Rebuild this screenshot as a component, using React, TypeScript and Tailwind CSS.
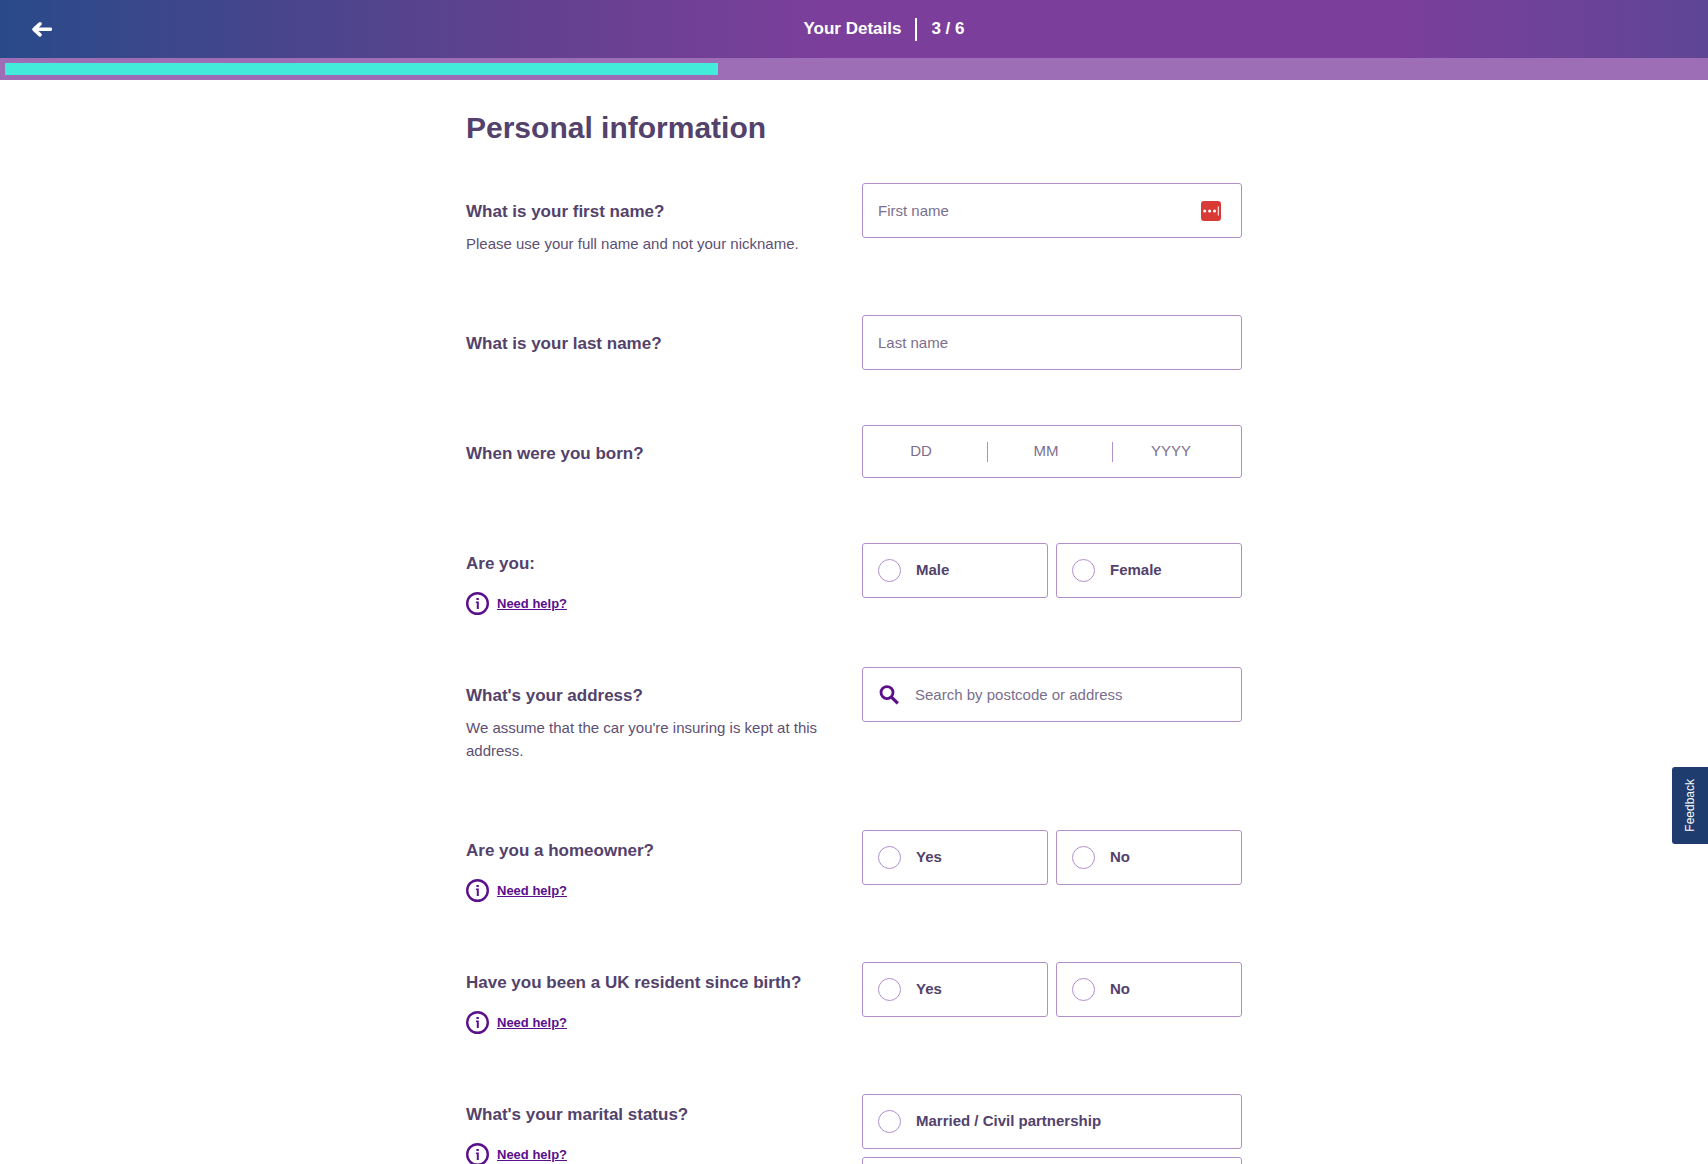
import { ReactNode } from "react";

interface QuestionProps {
  label: string;
  htmlFor?: string;
  hint?: string;
  needHelp?: boolean;
  children: ReactNode;
}

function InfoIcon() {
  return (
    <svg className="h-[23px] w-[23px]" viewBox="0 0 23 23" fill="none" aria-hidden="true">
      <circle cx="11.5" cy="11.5" r="10.3" stroke="#5a0f8c" strokeWidth="2.4" />
      <rect x="10.4" y="6" width="2.4" height="2" fill="#5a0f8c" />
      <path d="M9.9 9.6h2.9V17h-2v-5.9h-.9z" fill="#5a0f8c" />
    </svg>
  );
}

function Question({ label, htmlFor, hint, needHelp, children }: QuestionProps) {
  const labelClass = "block text-[17px] leading-6 font-bold text-[#53426b]";

  return (
    <div
      className="grid min-h-[110px] grid-cols-1 pb-[52px] md:grid-cols-[minmax(0,1fr)_380px] md:gap-x-4"
      role={htmlFor ? undefined : "group"}
      aria-label={htmlFor ? undefined : label}
    >
      <div className="pt-[17px]">
        {htmlFor ? (
          <label htmlFor={htmlFor} className={labelClass}>
            {label}
          </label>
        ) : (
          <p className={labelClass}>{label}</p>
        )}
        {hint && (
          <p className="my-2 text-[15px] leading-[23px] text-[#5d4f73]">{hint}</p>
        )}
        {needHelp && (
          <a
            href="#help"
            className="mt-4 flex w-fit items-center gap-2 text-[13px] leading-[23px] font-bold text-[#5a0f8c] underline"
          >
            <InfoIcon />
            Need help?
          </a>
        )}
      </div>
      <div>{children}</div>
    </div>
  );
}

const fieldClass =
  "h-[55px] w-full rounded-[3px] border border-[#b18fcb] bg-white text-[15px] text-[#53426b] placeholder:text-[#7b6f8d]";

function RadioOption({ name, label }: { name: string; label: string }) {
  return (
    <label className="flex h-[55px] flex-1 cursor-pointer items-center gap-[15px] rounded-[3px] border border-[#b18fcb] px-[15px] text-[15px] font-bold text-[#53426b]">
      <input
        type="radio"
        name={name}
        className="h-[23px] w-[23px] appearance-none rounded-full border border-[#b18fcb] checked:border-8 checked:border-[#5a0f8c]"
      />
      {label}
    </label>
  );
}

function YesNo({ name }: { name: string }) {
  return (
    <div className="mt-2 flex gap-2">
      <RadioOption name={name} label="Yes" />
      <RadioOption name={name} label="No" />
    </div>
  );
}

const maritalStatuses = ["Married / Civil partnership", "Single"];

const dateParts = [
  { placeholder: "DD", label: "Day" },
  { placeholder: "MM", label: "Month" },
  { placeholder: "YYYY", label: "Year" },
];

export default function App() {
  return (
    <div className="min-h-screen bg-white font-['Liberation_Sans',Arial,sans-serif]">
      <header className="flex h-[58px] items-center bg-[linear-gradient(90deg,#294a89_0%,#61418f_30%,#7b3f9b_48%,#7b3f9b_82%,#5f4595_100%)] text-white">
        <button type="button" aria-label="Back" className="flex w-[60px] justify-end pr-2">
          <svg className="h-5 w-5" viewBox="0 0 20 20" fill="none" aria-hidden="true">
            <path
              d="M8 4.8 2 10.3l6 5.5M2.5 10.3H18.4"
              stroke="currentColor"
              strokeWidth="3.6"
              strokeLinecap="round"
              strokeLinejoin="round"
            />
          </svg>
        </button>
        <div className="flex flex-1 items-center justify-center text-[17px] leading-6 font-bold">
          <span>Your Details</span>
          <span className="mx-[14px] h-[23px] w-[2px] bg-white" />
          <span>3 / 6</span>
        </div>
      </header>
      <div className="bg-[#9d6db5] px-[5px] py-[5px]">
        <div className="h-3 w-[42%] bg-[#43ecda]" />
      </div>

      <main className="mx-auto max-w-[808px] px-4 pt-[30px]">
        <h1 className="mb-[37px] text-[30px] leading-9 font-bold text-[#53426b]">
          Personal information
        </h1>
        <form>
          <Question
            label="What is your first name?"
            htmlFor="first-name"
            hint="Please use your full name and not your nickname."
          >
            <div className="relative">
              <input id="first-name" type="text" placeholder="First name" className={`${fieldClass} px-[15px]`} />
              <svg
                className="absolute top-[18px] right-[21px] h-5 w-5"
                viewBox="0 0 20 20"
                aria-hidden="true"
              >
                <rect width="20" height="20" rx="3" fill="#d93a36" />
                <circle cx="3.7" cy="10" r="1.5" fill="#fff" />
                <circle cx="8.6" cy="10" r="1.5" fill="#fff" />
                <circle cx="13.5" cy="10" r="1.5" fill="#fff" />
                <rect x="16.8" y="5.5" width="1" height="9" fill="#fff" />
              </svg>
            </div>
          </Question>

          <Question label="What is your last name?" htmlFor="last-name">
            <input id="last-name" type="text" placeholder="Last name" className={`${fieldClass} px-[15px]`} />
          </Question>

          <Question label="When were you born?">
            <div className="flex h-[53px] items-center rounded-[3px] border border-[#b18fcb] pr-1">
              {dateParts.map((part) => (
                <input
                  key={part.label}
                  type="text"
                  inputMode="numeric"
                  aria-label={part.label}
                  placeholder={part.placeholder}
                  className="h-5 w-0 flex-1 border-r border-[#b18fcb] pr-4 pl-2 text-center text-[15px] text-[#53426b] placeholder:text-[#7b6f8d] last:border-r-0"
                />
              ))}
            </div>
          </Question>

          <Question label="Are you:" needHelp>
            <div className="mt-2 flex gap-2">
              <RadioOption name="gender" label="Male" />
              <RadioOption name="gender" label="Female" />
            </div>
          </Question>

          <Question
            label="What's your address?"
            htmlFor="address"
            hint="We assume that the car you're insuring is kept at this address."
          >
            <div className="relative">
              <svg
                className="absolute top-[18px] left-[17px] h-5 w-5"
                viewBox="0 0 20 20"
                fill="none"
                stroke="#5a0f8c"
                aria-hidden="true"
              >
                <circle cx="8" cy="7.6" r="6" strokeWidth="2.8" />
                <path d="M12.2 11.8l6.6 6.6" strokeWidth="3.2" />
              </svg>
              <input
                id="address"
                type="text"
                placeholder="Search by postcode or address"
                className={`${fieldClass} pr-[15px] pl-[52px]`}
              />
            </div>
          </Question>

          <Question label="Are you a homeowner?" needHelp>
            <YesNo name="homeowner" />
          </Question>

          <Question label="Have you been a UK resident since birth?" needHelp>
            <YesNo name="resident" />
          </Question>

          <Question label="What's your marital status?" needHelp>
            <div className="mt-2 flex flex-col gap-2">
              {maritalStatuses.map((status) => (
                <div key={status} className="flex">
                  <RadioOption name="marital-status" label={status} />
                </div>
              ))}
            </div>
          </Question>
        </form>
      </main>

      <button
        type="button"
        className="fixed right-0 bottom-[320px] flex h-[77px] w-9 items-center justify-center rounded-l-[3px] bg-[#1f3c6e] text-[12px] text-white"
      >
        <span className="rotate-180 [writing-mode:vertical-rl]">Feedback</span>
      </button>
    </div>
  );
}
